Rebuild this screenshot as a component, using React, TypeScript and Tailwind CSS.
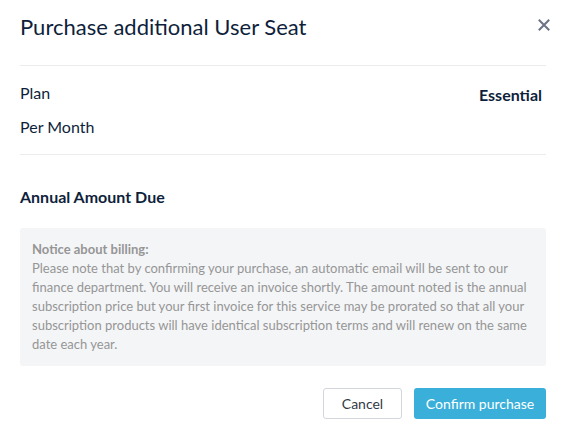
import React from "react";

export default function App() {
  return (
    <div
      className="w-[566px] h-[435px] bg-white text-[#0f1f3b] overflow-hidden"
      style={{ fontFamily: "Lato, 'Noto Sans', sans-serif" }}
    >
      <div className="flex items-start justify-between pl-5 pr-4 pt-[13px]">
        <h1 className="text-[22px] leading-[28px] font-normal">Purchase additional User Seat</h1>
        <button className="mt-[6px] w-3 h-3 text-[#6b7385]" aria-label="Close">
          <svg viewBox="0 0 12 12" width="12" height="12" fill="none" stroke="currentColor" strokeWidth="2" strokeLinecap="square">
            <path d="M1.5 1.5 L10.5 10.5 M10.5 1.5 L1.5 10.5" />
          </svg>
        </button>
      </div>

      <div className="mx-5 mt-[24px] h-px bg-[#ececef]" />

      <div className="mx-5 pt-[15px]">
        <div className="flex items-start justify-between">
          <span className="text-[16px] leading-[24px]">Plan</span>
          <span className="mt-[2px] text-[16px] leading-[24px] font-bold pr-1">Essential</span>
        </div>
        <div className="mt-[8px] text-[16px] leading-[24px]">Per Month</div>
      </div>

      <div className="mx-5 mt-[15px] h-px bg-[#ececef]" />

      <div className="mx-5 mt-[30px] text-[16px] leading-[24px] font-bold">Annual Amount Due</div>

      <div className="mx-5 mt-[19px] rounded-[3px] bg-[#f4f5f7] px-3 py-3 text-[13px] leading-[19px] text-[#969696]">
        <div className="font-bold">Notice about billing:</div>
        <div>
          Please note that by confirming your purchase, an automatic email will be sent to our finance department. You
          will receive an invoice shortly. The amount noted is the annual subscription price but your first invoice for
          this service may be prorated so that all your subscription products will have identical subscription terms
          and will renew on the same date each year.
        </div>
      </div>

      <div className="mx-5 mt-[22px] flex justify-end gap-3">
        <button className="h-[31px] w-[79px] rounded-[3px] border border-[#d3d6dc] bg-white text-[14px] text-[#333a45]">
          Cancel
        </button>
        <button className="h-[31px] w-[132px] rounded-[3px] bg-[#3aafda] text-[14px] text-white">
          Confirm purchase
        </button>
      </div>
    </div>
  );
}
